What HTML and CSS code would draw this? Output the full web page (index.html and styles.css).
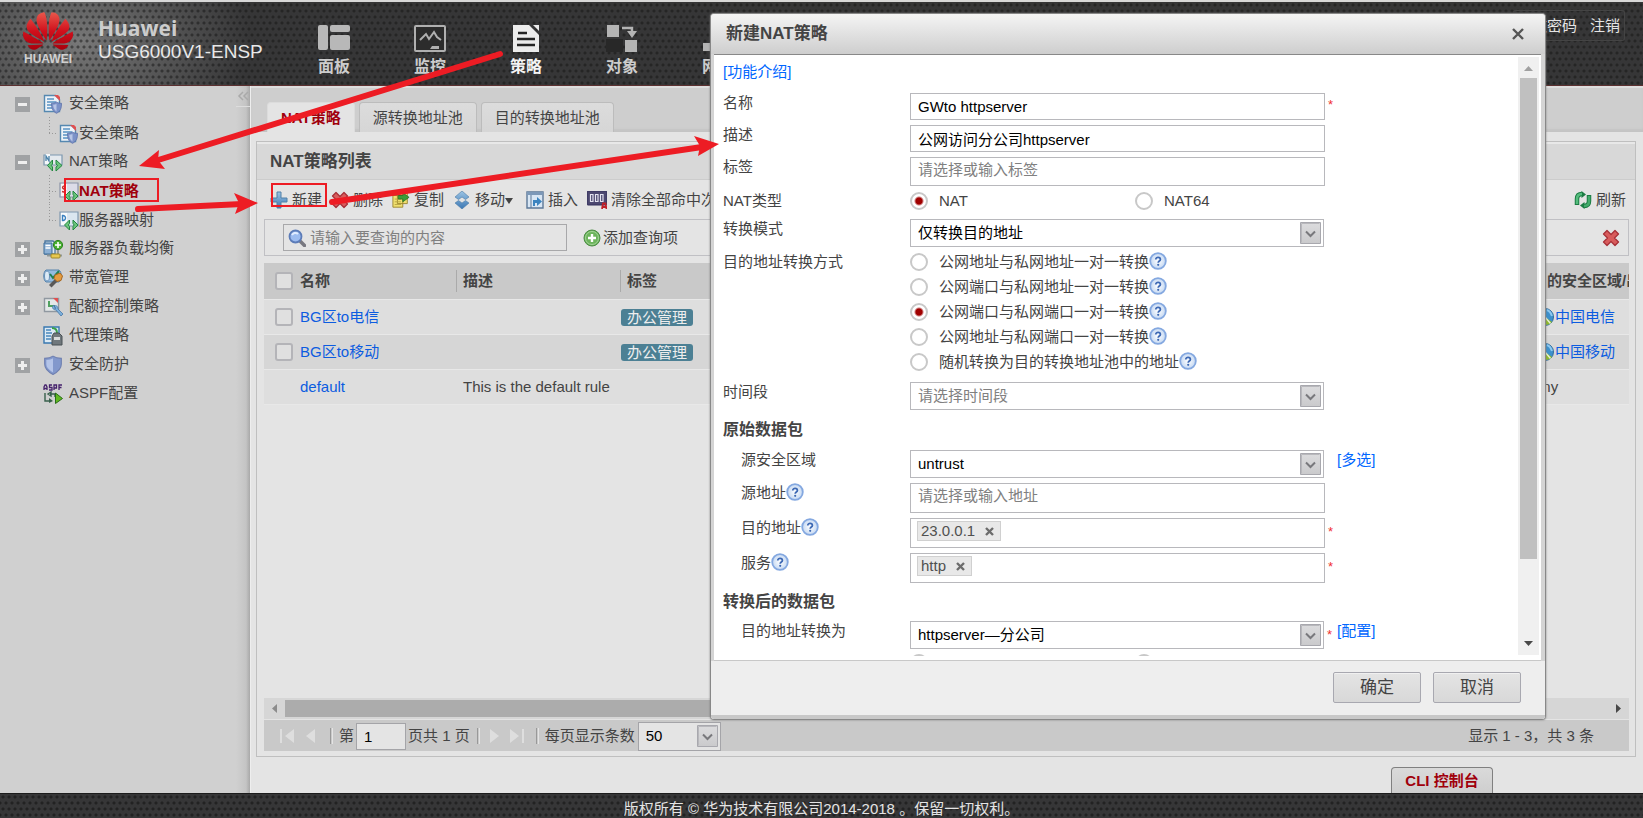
FILE: index.html
```html
<!DOCTYPE html>
<html lang="zh-CN">
<head>
<meta charset="utf-8">
<title>USG6000V1-ENSP</title>
<link rel="stylesheet" href="styles.css">
</head>
<body>
<svg class="defs" width="0" height="0" aria-hidden="true">
  <defs>
    <linearGradient id="gRed" x1="0" y1="0" x2="0" y2="1"><stop offset="0" stop-color="#e8584c"/><stop offset=".5" stop-color="#d0101c"/><stop offset="1" stop-color="#a8000c"/></linearGradient>
    <linearGradient id="gBlue" x1="0" y1="0" x2="0" y2="1"><stop offset="0" stop-color="#9cc4e4"/><stop offset="1" stop-color="#3c78b4"/></linearGradient>
    <linearGradient id="gBtn" x1="0" y1="0" x2="0" y2="1"><stop offset="0" stop-color="#dcdcde"/><stop offset="1" stop-color="#cacacc"/></linearGradient>
    <radialGradient id="gHelp"><stop offset="0" stop-color="#fff"/><stop offset="1" stop-color="#c4d8f2"/></radialGradient>
    <symbol id="shield" viewBox="0 0 18 18"><path d="M9 1c2 1.500 4.500 2 7.500 2v5c0 4-3 7-7.500 9.500C4.500 15 1.500 12 1.500 8V3C4.500 3 7 2.500 9 1z" fill="#8298cc" stroke="#7080b0"/><path d="M9 3v12.500C5.500 13.500 3 11 3 8V4.500c2.500 0 4.500-.5 6-1.500z" fill="#b4c4e8"/></symbol>
    <symbol id="policy" viewBox="0 0 20 20"><path d="M1.500 1.500h11l4 4v12h-15z" fill="#eef3f8" stroke="#5588b0" stroke-width="1.400"/><path d="M4 5h7M4 8h9M4 11h6M4 14h5" stroke="#5a94c4" stroke-width="1.500"/><path d="M11 1l6 6V3l-2-2z" fill="#e05050"/><path d="M13.500 8c1.500 1 3 1.300 5 1.300 0 5-1 8-5 10-4-2-5-5-5-10 2 0 3.500-.3 5-1.300z" fill="#7c92c8" stroke="#5c70a8" stroke-width=".8"/><path d="M13.500 10v7.500c-2-1.500-3.300-3.500-3.300-6.800 1.300 0 2.300-.2 3.300-.7z" fill="#b8c6e6"/></symbol>
    <symbol id="nat" viewBox="0 0 20 20"><path d="M1 3h18v10H1z" fill="#e4e9ee" stroke="#7c98b0" stroke-width="1.200"/><path d="M2 2h5v10H2z" fill="#f6f8fa"/><path d="M3 9V4l3 5V4" stroke="#4880a8" stroke-width="1.300" fill="none"/><path d="M9.500 8L4.500 13.500l5 5.500v-4l-1.200-1.500 1.200-1.500zM13 8l6 5.500-6 5.500v-4l1.700-1.500L13 12z" fill="#6cc47c" stroke="#228840" stroke-width="1"/></symbol>
    <symbol id="natSrc" viewBox="0 0 20 20"><path d="M1 1h18v14H1z" fill="#dcdce8" stroke="#8c94a8" stroke-width="1.200"/><path d="M2 2h6v12H2z" fill="#f8f4f4"/><path d="M6.500 4.500c-3-1.500-4 2-1.500 2.500S7 11 3 9.500" stroke="#c03030" stroke-width="1.400" fill="none"/><path d="M11 9l-5 5 5 5v-3.500L9.800 14l1.200-1.500zM14 9l5 5-5 5v-3.500l1.200-1.500-1.200-1.500z" fill="#6cc47c" stroke="#228840"/></symbol>
    <symbol id="natDst" viewBox="0 0 20 20"><path d="M1 1h18v14H1z" fill="#dbe6f0" stroke="#8098b0" stroke-width="1.200"/><path d="M2 2h6v12H2z" fill="#f8fafc"/><path d="M3.500 4.500v5c4 .5 4-5.500 0-5z" stroke="#3a80c0" stroke-width="1.400" fill="none"/><path d="M10.500 9l-5 5 5 5v-3.500L9.300 14l1.200-1.500zM14 9l5 5-5 5v-3.500l1.200-1.500-1.200-1.500z" fill="#6cc47c" stroke="#228840"/></symbol>
    <symbol id="slb" viewBox="0 0 20 20"><path d="M2 2h8l2 2v11H2z" fill="#dce8f2" stroke="#4c78a0" stroke-width="1.300"/><path d="M1 4h8v11H1z" fill="#8cb0d4" stroke="#3c6c98"/><path d="M2.500 6.500h5M2.500 9h5" stroke="#fff" stroke-width="1.500"/><circle cx="15" cy="6" r="4.600" fill="#48b030" stroke="#2c8020"/><path d="M15 3v6M12 6h6" stroke="#fff" stroke-width="1.600"/><path d="M15 11v5M4 16.500h15" stroke="#909898" stroke-width="2"/><rect x="8" y="15" width="9" height="4" rx="1" fill="#e8c850" stroke="#a08828"/></symbol>
    <symbol id="band" viewBox="0 0 20 20"><path d="M3 2h13c3 2 3 9 0 12H3C0 12 0 4 3 2z" fill="#94bce0" stroke="#5884ac"/><ellipse cx="4" cy="8" rx="2.500" ry="5" fill="#dceaf6" stroke="#6890b8"/><path d="M7 6l3 4 6-7" stroke="#208050" stroke-width="2" fill="none"/><path d="M6 17l7-7 2.500 2.500-7 7z" fill="#585858"/><path d="M12 7l5-2 2.500 3-1.500 4.500-4 1-3-3z" fill="#e49c40" stroke="#a86820"/></symbol>
    <symbol id="quota" viewBox="0 0 20 20"><path d="M1.500 1.500h14v13h-14z" fill="#e4e8e8" stroke="#9098a0" stroke-width="1.400"/><path d="M6 4v5h6" stroke="#50a060" stroke-width="2" fill="none"/><path d="M10 1h5v5z" fill="#e05050"/><path d="M11 8c-3 2-1 5 2 5l5 6 2-2-5-5c0-3-2-4-4-3l2 2-1 1z" fill="#7cb0dc" stroke="#4878a8" stroke-width=".8"/></symbol>
    <symbol id="proxy" viewBox="0 0 20 20"><path d="M1 1h15v16H1z" fill="#dceaf4" stroke="#3878b0" stroke-width="1.400"/><path d="M3 4h5M3 7h6M3 10h5M3 13h5" stroke="#4888bc" stroke-width="1.500"/><path d="M9 2c4 0 5 2 5 5" stroke="#38a048" stroke-width="2" fill="none"/><path d="M9 10l2-3h5l3 3v9H9z" fill="#70787c" stroke="#485054"/><path d="M11 11h6v3h-6z" fill="#d8dcdc"/></symbol>
    <symbol id="aspf" viewBox="0 0 20 20"><path d="M1 6V3l1-2h1l1 2v3M1 4.500h3M9 1H6.500v2.500H9V6H6M11 6V1h2.500v3H11M19 1h-3v5M16 3.500h2.500" stroke="#46226c" stroke-width="1.300" fill="none"/><path d="M2 9v8h5M7 10h5v3M5 10l3-2v4z" stroke="#38604c" stroke-width="1.400" fill="none"/><path d="M12.500 9l7 5.500-7 5z" fill="#60b820" stroke="#286c18"/><path d="M6 14l4 3-4 2z" fill="#38604c"/></symbol>
    <symbol id="plus" viewBox="0 0 18 18"><path d="M7 1h4v6h6v4h-6v6H7v-6H1V7h6z" fill="url(#gBlue)" stroke="#5080a8"/></symbol>
    <symbol id="cross" viewBox="0 0 18 18"><path d="M5 1.500l4 4 4-4 3.500 3.500-4 4 4 4-3.500 3.500-4-4-4 4L1.500 13l4-4-4-4z" fill="#d85c5c" stroke="#a83038" stroke-width="1.300" stroke-linejoin="round"/></symbol>
    <symbol id="copy" viewBox="0 0 20 18"><path d="M6 1h11v12H6zM1 4h11v13H1z" fill="#f0e070" stroke="#98842c"/><path d="M3 8h7M3 11h7M3 14h7" stroke="#b8a440"/><path d="M7 4h5V1l7 5-7 5V8H7z" fill="#3c9c38" stroke="#1c6c20" stroke-width=".8"/></symbol>
    <symbol id="move" viewBox="0 0 16 18"><path d="M8 0l7 6-3.500 2.500L8 6 4.500 8.500 1 6zM8 18l7-6-3.500-2.500L8 12 4.500 9.500 1 12z" fill="url(#gBlue)" stroke="#4c7ca8" stroke-width=".6"/></symbol>
    <symbol id="insert" viewBox="0 0 18 18"><path d="M1 1h16v16H1z" fill="#d8e6f4" stroke="#5c7898" stroke-width="1.400"/><path d="M1 1h16v3H1z" fill="#7c98b8"/><path d="M5 4v13" stroke="#5c7898"/><path d="M7 15v-6h4V6l5 4.500-5 4.500v-3H9v3z" fill="#3c84c0"/></symbol>
    <symbol id="counter" viewBox="0 0 20 18"><rect x="0" y="0" width="20" height="14" rx="1" fill="#4c4870" stroke="#34305c"/><path d="M3.500 3.500H6v7H3.500zM8.500 3.500H11v7H8.500zM13.500 3.500H16v7h-2.500z" fill="none" stroke="#e4e4f0" stroke-width="1.200"/><path d="M15 18l1-5.500h2.500L19.500 18M16 16h3" stroke="#c02028" stroke-width="1.800" fill="none"/></symbol>
    <symbol id="search" viewBox="0 0 18 18"><path d="M11 11l5.500 5.500" stroke="#787880" stroke-width="3.500" stroke-linecap="round"/><circle cx="7.500" cy="7.500" r="6" fill="#9cbcf0" stroke="#5c7cb8" stroke-width="1.800"/><path d="M4 6c1-2 4-3 6-1" stroke="#e0ecff" stroke-width="2" fill="none"/></symbol>
    <symbol id="add" viewBox="0 0 18 18"><circle cx="9" cy="9" r="8" fill="#6cb45c" stroke="#4c8c44"/><circle cx="9" cy="9" r="6.500" fill="none" stroke="#a4d498"/><path d="M9 5v8M5 9h8" stroke="#fff" stroke-width="2.400"/></symbol>
    <symbol id="refresh" viewBox="0 0 18 18"><path d="M8 3C4 3 3 5 3 8v6" fill="none" stroke="#1c7c44" stroke-width="4.500"/><path d="M7.500 0v7L12 3.500z" fill="#1c7c44"/><path d="M8 3C4 3 3 5 3 8v5" fill="none" stroke="#54bc7c" stroke-width="2.500"/><path d="M10 15c4 0 5-2 5-5V4" fill="none" stroke="#1c7c44" stroke-width="4.500"/><path d="M10.500 18v-7L6 14.500z" fill="#1c7c44"/><path d="M10 15c4 0 5-2 5-5V5" fill="none" stroke="#44ac6c" stroke-width="2.500"/></symbol>
    <symbol id="globe" viewBox="0 0 18 18"><circle cx="9" cy="9" r="8.500" fill="#3c90cc" stroke="#306c9c"/><path d="M9 9l7 5c-3 4-10 4-14 0z" fill="#90bc28"/><path d="M9 9l5.500 6.500M9 9l-7 5" stroke="#e8f0d8" stroke-width="1.400"/><path d="M11 2c3 1 4 3 5 6" stroke="#8cc8f0" stroke-width="2" fill="none"/></symbol>
    <symbol id="help" viewBox="0 0 18 18"><circle cx="9" cy="9" r="7.800" fill="url(#gHelp)" stroke="#84a8e0" stroke-width="1.800"/><path d="M6.800 7.400c0-2.800 4.600-2.600 4.600 0 0 1.600-2.200 1.700-2.200 3.300" stroke="#3c68b4" stroke-width="1.800" fill="none"/><circle cx="9.200" cy="12.800" r="1.100" fill="#3c68b4"/></symbol>
    <symbol id="drop" viewBox="0 0 21 22"><path d="M.5.5h20v21H.5z" fill="url(#gBtn)" stroke="#a8a8ae"/><path d="M1.500 20.500V1.500h18" fill="none" stroke="#b8b8bc"/><path d="M6 9.500l4.500 4.500L15 9.500" fill="none" stroke="#78787c" stroke-width="2"/></symbol>
    <symbol id="tabx" viewBox="0 0 9 9"><path d="M1 1l7 7M8 1L1 8" stroke="#6c6c6c" stroke-width="2.400"/></symbol>
  </defs>
</svg>

<header class="top">
  <div class="logo">
    <svg width="50" height="38" viewBox="0 2.900 24 18.200" aria-hidden="true"><path fill="url(#gRed)" d="M3.670 6.140S1.820 7.910 1.720 9.780v.35c.08 1.510 1.220 2.400 1.220 2.400 1.830 1.790 6.260 4.040 7.300 4.550 0 0 .06.03.1-.01l.02-.04v-.04C7.520 10.800 3.670 6.140 3.670 6.140zM9.650 18.600c-.02-.08-.1-.08-.1-.08l-7.380.26c.8 1.430 2.150 2.530 3.560 2.200.96-.25 3.160-1.780 3.880-2.300.06-.05.04-.09.04-.09zm.08-.78C6.490 15.630.21 12.280.21 12.280c-.15.46-.2.9-.21 1.300v.07c0 1.070.4 1.820.4 1.820.8 1.690 2.340 2.200 2.340 2.200.7.3 1.400.31 1.400.31.12.02 4.400 0 5.540 0 .05 0 .08-.05.08-.05v-.06c0-.03-.03-.05-.03-.05zM9.060 3.190a3.420 3.420 0 00-2.570 3.150v.41c.03.6.16 1.050.16 1.050.66 2.900 3.860 7.650 4.550 8.650.05.05.1.03.1.03a.1.1 0 00.06-.1c1.060-10.600-1.110-13.420-1.110-13.420-.32.02-1.190.23-1.190.23zm8.299 2.270s-.49-1.800-2.440-2.280c0 0-.57-.14-1.170-.22 0 0-2.180 2.810-1.120 13.430.01.07.06.08.06.08.07.03.1-.03.1-.03.72-1.030 3.900-5.760 4.550-8.640 0 0 .36-1.400.02-2.340zm-2.920 13.070s-.07 0-.09.05c0 0-.01.07.03.1.7.51 2.850 2 3.880 2.300 0 0 .16.05.43.06h.14c.69-.02 1.900-.37 3-2.260l-7.400-.25zm7.830-8.410c.14-2.060-1.940-3.970-1.940-3.980 0 0-3.850 4.660-6.670 10.800 0 0-.03.08.02.13l.04.01h.06c1.060-.53 5.460-2.770 7.280-4.540 0 0 1.150-.93 1.210-2.420zm1.520 2.140s-6.280 3.370-9.520 5.550c0 0-.05.04-.03.11 0 0 .03.06.07.06 1.160 0 5.560 0 5.670-.02 0 0 .57-.02 1.270-.29 0 0 1.560-.5 2.370-2.270 0 0 .73-1.450.17-3.140z"/></svg>
    <span class="logo-name">HUAWEI</span>
  </div>
  <div class="device"><strong class="brand">Huawei</strong><span class="model">USG6000V1-ENSP</span></div>
  <nav class="nav">
    <a class="nav-item" href="#dash"><svg width="32" height="28" viewBox="0 0 32 28"><g fill="#b8b8b8"><rect width="10" height="25" rx="2"/><rect x="12" width="20" height="7" rx="2"/><rect x="12" y="10" width="20" height="15" rx="2"/></g></svg>面板</a>
    <a class="nav-item" href="#monitor"><svg width="32" height="28" viewBox="0 0 32 28"><rect x="1" y="1" width="30" height="25" rx="1" fill="#2c2c2c" stroke="#b0b0b0" stroke-width="2"/><path d="M6 15l6-6 3 5 5-7 3 5 4 3" fill="none" stroke="#b0b0b0" stroke-width="2"/><path d="M18 21h7v3h-9z" fill="#b0b0b0"/></svg>监控</a>
    <a class="nav-item current" href="#policy"><svg width="32" height="28" viewBox="0 0 32 28"><path d="M3 0h16l10 10v17H3z" fill="#ececec"/><path d="M23 0h6v6z" fill="#ececec"/><path d="M8 8h9M7 14h18M7 20h18" stroke="#242424" stroke-width="2.500"/></svg>策略</a>
    <a class="nav-item" href="#object"><svg width="32" height="28" viewBox="0 0 32 28"><path d="M0 14h17v13H0z" fill="#282828"/><path d="M1 0h12v12H1zM19 15h12v12H19z" fill="#b4b4b4"/><path d="M16 3h10v4" fill="none" stroke="#b4b4b4" stroke-width="2.500"/><path d="M21 6h10l-5 7z" fill="#b4b4b4"/></svg>对象</a>
    <a class="nav-item" href="#network"><svg width="32" height="28" viewBox="0 0 32 28"><path d="M10 0h12v10h-5v6h14v10H19v-8h-6v8H1V18h14V10h-5z" fill="#b4b4b4"/></svg>网络</a>
  </nav>
  <div class="account"><a href="#password">修改密码</a><a href="#logout">注销</a></div>
</header>

<div class="middle">
  <aside class="side">
    <ul class="tree">
      <li class="node"><button class="toggle minus" aria-label="收起"></button><svg class="ico"><use href="#policy"/></svg><a href="#a">安全策略</a></li>
      <li class="node child last"><svg class="ico"><use href="#policy"/></svg><a href="#a1">安全策略</a></li>
      <li class="node"><button class="toggle minus" aria-label="收起"></button><svg class="ico"><use href="#nat"/></svg><a href="#b">NAT策略</a></li>
      <li class="node child active"><svg class="ico"><use href="#natSrc"/></svg><a href="#b1">NAT策略</a></li>
      <li class="node child last"><svg class="ico"><use href="#natDst"/></svg><a href="#b2">服务器映射</a></li>
      <li class="node"><button class="toggle" aria-label="展开"></button><svg class="ico"><use href="#slb"/></svg><a href="#c">服务器负载均衡</a></li>
      <li class="node"><button class="toggle" aria-label="展开"></button><svg class="ico"><use href="#band"/></svg><a href="#d">带宽管理</a></li>
      <li class="node"><button class="toggle" aria-label="展开"></button><svg class="ico"><use href="#quota"/></svg><a href="#e">配额控制策略</a></li>
      <li class="node"><span class="no-toggle"></span><svg class="ico"><use href="#proxy"/></svg><a href="#f">代理策略</a></li>
      <li class="node"><button class="toggle" aria-label="展开"></button><svg class="ico"><use href="#shield"/></svg><a href="#g">安全防护</a></li>
      <li class="node"><span class="no-toggle"></span><svg class="ico"><use href="#aspf"/></svg><a href="#h">ASPF配置</a></li>
    </ul>
    <button class="collapse" aria-label="收起菜单"><svg width="12" height="10" viewBox="0 0 12 10"><path d="M6 1L2 5l4 4M11 1L7 5l4 4" fill="none" stroke="#aaa" stroke-width="1.500"/></svg></button>
  </aside>

  <main class="work">
    <div class="tabs">
      <a class="tab selected" href="#t1">NAT策略</a>
      <a class="tab" href="#t2">源转换地址池</a>
      <a class="tab" href="#t3">目的转换地址池</a>
    </div>
    <section class="panel">
      <h2 class="panel-title">NAT策略列表</h2>
      <div class="toolbar">
        <button class="tool"><svg class="ti"><use href="#plus"/></svg>新建</button>
        <button class="tool"><svg class="ti"><use href="#cross"/></svg>删除</button>
        <button class="tool"><svg class="ti"><use href="#copy"/></svg>复制</button>
        <button class="tool menu"><svg class="ti"><use href="#move"/></svg><span>移动<svg class="caret" width="8" height="6" viewBox="0 0 8 6"><path d="M0 0h8L4 6z" fill="#444"/></svg></span></button>
        <button class="tool"><svg class="ti"><use href="#insert"/></svg>插入</button>
        <button class="tool"><svg class="ti wide"><use href="#counter"/></svg>清除全部命中次数</button>
        <button class="tool end"><svg class="ti"><use href="#refresh"/></svg>刷新</button>
      </div>
      <div class="query">
        <label class="query-box"><svg class="ti"><use href="#search"/></svg><input class="query-input" type="text" placeholder="请输入要查询的内容" aria-label="查询"></label>
        <button class="add"><svg class="ti"><use href="#add"/></svg>添加查询项</button>
        <button class="clear" aria-label="清除"><svg class="ti"><use href="#cross"/></svg></button>
      </div>
      <div class="grid-body">
        <table class="grid">
          <colgroup><col class="c-check"><col class="c-name"><col class="c-desc"><col><col class="c-zone"></colgroup>
          <thead><tr><th><input class="check" type="checkbox" aria-label="全选"></th><th>名称</th><th class="split">描述</th><th class="split">标签</th><th class="zone">目的安全区域/出接口</th></tr></thead>
          <tbody>
            <tr><td><input class="check" type="checkbox" aria-label="选择 BG区to电信"></td><td><a href="#r1">BG区to电信</a></td><td></td><td class="tag-cell"><span class="tag">办公管理</span></td><td><a class="zone-link" href="#z1"><svg class="ti"><use href="#globe"/></svg>中国电信</a></td></tr>
            <tr class="alt"><td><input class="check" type="checkbox" aria-label="选择 BG区to移动"></td><td><a href="#r2">BG区to移动</a></td><td></td><td class="tag-cell"><span class="tag">办公管理</span></td><td><a class="zone-link" href="#z2"><svg class="ti"><use href="#globe"/></svg>中国移动</a></td></tr>
            <tr><td></td><td><a href="#r3">default</a></td><td class="desc">This is the default rule</td><td></td><td class="any">any</td></tr>
          </tbody>
        </table>
      </div>
      <div class="hscroll"><svg width="21" height="21" viewBox="0 0 21 21"><path d="M13 6v9l-5-4.500z" fill="#8c8c8c"/></svg><span class="hthumb"></span><svg width="21" height="21" viewBox="0 0 21 21"><path d="M8 6v9l5-4.500z" fill="#484848"/></svg></div>
      <div class="pager">
        <button class="pg" aria-label="首页"><svg width="16" height="14" viewBox="0 0 16 14"><path d="M1 0h2v14H1zM15 0v14L6 7z" fill="#dedede"/></svg></button>
        <button class="pg" aria-label="上一页"><svg width="16" height="14" viewBox="0 0 16 14"><path d="M12 0v14L3 7z" fill="#dedede"/></svg></button>
        <span class="bar"></span>
        <label class="pg-label" for="page">第</label><input class="pg-input" id="page" type="text" value="1"><span>页共 1 页</span>
        <span class="bar"></span>
        <button class="pg" aria-label="下一页"><svg width="16" height="14" viewBox="0 0 16 14"><path d="M3 0v14l9-7z" fill="#dedede"/></svg></button>
        <button class="pg" aria-label="末页"><svg width="16" height="14" viewBox="0 0 16 14"><path d="M13 0h2v14h-2zM1 0v14l9-7z" fill="#dedede"/></svg></button>
        <span class="bar"></span>
        <label class="pg-label" for="size">每页显示条数</label>
        <span class="combo small"><select id="size"><option>50</option></select><svg><use href="#drop"/></svg></span>
        <span class="total">显示 1 - 3，共 3 条</span>
      </div>
    </section>
    <div class="console"><button class="cli">CLI 控制台</button></div>
  </main>
</div>
<footer class="foot">版权所有 © 华为技术有限公司2014-2018 。保留一切权利。</footer>

<section class="dialog" role="dialog" aria-labelledby="dlg">
  <header class="dlg-head"><h2 id="dlg">新建NAT策略</h2><button class="close" aria-label="关闭"><svg width="12" height="12" viewBox="0 0 12 12"><path d="M1 1l10 10M11 1L1 11" stroke="#555" stroke-width="2.400"/></svg></button></header>
  <div class="dlg-body">
    <form class="form" id="f">
      <a class="intro" href="#intro">[功能介绍]</a>
      <div class="row"><label for="name">名称</label><input class="field" id="name" type="text" value="GWto httpserver"><span class="req">*</span></div>
      <div class="row"><label for="desc">描述</label><input class="field" id="desc" type="text" value="公网访问分公司httpserver"></div>
      <div class="row"><label for="tags">标签</label><input class="field tall" id="tags" type="text" placeholder="请选择或输入标签"></div>
      <div class="row"><span>NAT类型</span><div class="pair"><label class="opt"><input type="radio" name="type" checked>NAT</label><label class="opt"><input type="radio" name="type">NAT64</label></div></div>
      <div class="row"><label for="mode">转换模式</label><span class="combo"><select id="mode"><option>仅转换目的地址</option></select><svg><use href="#drop"/></svg></span></div>
      <div class="row"><span>目的地址转换方式</span>
        <div class="stack">
          <div class="line"><label class="opt"><input type="radio" name="way">公网地址与私网地址一对一转换</label><svg class="ti"><use href="#help"/></svg></div>
          <div class="line"><label class="opt"><input type="radio" name="way">公网端口与私网地址一对一转换</label><svg class="ti"><use href="#help"/></svg></div>
          <div class="line"><label class="opt"><input type="radio" name="way" checked>公网端口与私网端口一对一转换</label><svg class="ti"><use href="#help"/></svg></div>
          <div class="line"><label class="opt"><input type="radio" name="way">公网地址与私网端口一对一转换</label><svg class="ti"><use href="#help"/></svg></div>
          <div class="line"><label class="opt"><input type="radio" name="way">随机转换为目的转换地址池中的地址</label><svg class="ti"><use href="#help"/></svg></div>
        </div>
      </div>
      <div class="row"><label for="time">时间段</label><span class="combo empty"><select id="time"><option>请选择时间段</option></select><svg><use href="#drop"/></svg></span></div>
      <h3 class="group">原始数据包</h3>
      <div class="row sub"><label for="zone">源安全区域</label><span class="combo"><select id="zone"><option>untrust</option></select><svg><use href="#drop"/></svg></span><a class="side-link" href="#multi">[多选]</a></div>
      <div class="row sub"><label for="src">源地址<svg class="ti"><use href="#help"/></svg></label><input class="field tall" id="src" type="text" placeholder="请选择或输入地址"></div>
      <div class="row sub"><span class="lbl">目的地址<svg class="ti"><use href="#help"/></svg></span><div class="field chips"><span class="chip">23.0.0.1<button type="button" aria-label="移除 23.0.0.1"><svg width="9" height="9"><use href="#tabx"/></svg></button></span></div><span class="req low">*</span></div>
      <div class="row sub"><span class="lbl">服务<svg class="ti"><use href="#help"/></svg></span><div class="field chips"><span class="chip">http<button type="button" aria-label="移除 http"><svg width="9" height="9"><use href="#tabx"/></svg></button></span></div><span class="req low">*</span></div>
      <h3 class="group second">转换后的数据包</h3>
      <div class="row sub"><label for="to">目的地址转换为</label><span class="combo"><select id="to"><option>httpserver—分公司</option></select><svg><use href="#drop"/></svg></span><span class="req low">*</span><a class="side-link after" href="#conf">[配置]</a></div>
      <div class="row"><span></span><div class="pair"><input type="radio" name="port" aria-label="端口"><input type="radio" name="port" aria-label="端口范围"></div></div>
    </form>
    <div class="vscroll"><svg width="21" height="21" viewBox="0 0 21 21"><path d="M6 14h9l-4.500-5z" fill="#a0a0a0"/></svg><span class="vthumb"></span><svg class="down" width="21" height="21" viewBox="0 0 21 21"><path d="M6 7h9l-4.500 5z" fill="#484848"/></svg></div>
  </div>
  <footer class="dlg-foot"><button class="btn">确定</button><button class="btn">取消</button></footer>
</section>

<svg class="marks" width="1643" height="818" viewBox="0 0 1643 818" aria-hidden="true">
  <g fill="none" stroke="#ed1c24" stroke-width="2"><path d="M65 179h93v22H65zM272 184h54v22h-54z"/></g>
  <g stroke="#ed1c24" stroke-width="6" stroke-linecap="round"><path d="M500 54L155 161M138 209l104-5M332 202l370-55"/></g>
  <g fill="#ed1c24"><path d="M139 166l20-16-1 10 7 9zM258 203l-24-10 5 10-4 11zM719 144l-25-8 6 10-2 10z"/></g>
</svg>
</body>
</html>
```
FILE: styles.css
```css
* { box-sizing: border-box; }
body {
  margin: 0;
  min-height: 100vh;
  display: flex;
  flex-direction: column;
  font: 15px/20px "Liberation Sans", "Noto Sans CJK SC", sans-serif;
  color: #444;
  background: #e4e4e4;
}
a { color: inherit; text-decoration: none; }
button, input, select { font: inherit; color: inherit; margin: 0; }
button { padding: 0; border: 0; background: none; }
h2, h3 { margin: 0; }
svg { flex: none; }
.defs { position: absolute; }
.ti { width: 18px; height: 18px; }
.ti.wide { width: 20px; }
.ico { width: 20px; height: 20px; }

.top, .foot {
  background-color: #363637;
  background-image:
    radial-gradient(circle at 3px 3px, rgba(20, 20, 20, .6) 1px, transparent 2px),
    radial-gradient(circle at 6px 9px, rgba(20, 20, 20, .6) 1px, transparent 2px),
    radial-gradient(circle at 0 9px, rgba(20, 20, 20, .6) 1px, transparent 2px);
  background-size: 6px 12px;
}
.top {
  display: flex;
  height: 86px;
  border-top: 2px solid #d8d8d8;
  border-bottom: 1px solid #5c3030;
  background-image:
    radial-gradient(circle at 3px 3px, rgba(20, 20, 20, .5) 1px, transparent 2px),
    radial-gradient(circle at 6px 9px, rgba(20, 20, 20, .5) 1px, transparent 2px),
    radial-gradient(circle at 0 9px, rgba(20, 20, 20, .5) 1px, transparent 2px),
    radial-gradient(ellipse 170px 120px at 80px 40px, #787878, transparent);
  background-size: 6px 12px, 6px 12px, 6px 12px, 100% 100%;
}
.logo { display: flex; flex-direction: column; align-items: center; width: 96px; padding-top: 10px; }
.logo-name { color: #d0d0d0; font-size: 12px; font-weight: bold; line-height: 18px; }
.device { display: flex; flex-direction: column; width: 190px; padding: 14px 0 0 2px; }
.brand { font-family: "Open Sans", sans-serif; font-size: 21px; line-height: 24px; color: #ccc; }
.model { font-size: 19px; line-height: 24px; color: #e8e8e8; }
.nav { display: flex; }
.nav-item { display: flex; flex-direction: column; align-items: center; gap: 2px; width: 96px; padding-top: 23px; font-size: 16px; line-height: 24px; font-weight: bold; color: #ccc; }
.nav-item.current { color: #f4f4f4; }
.account { display: flex; gap: 13px; align-items: center; height: 31px; margin: 8px 18px 0 auto; padding: 0 4px; border: 1px solid #444; border-left: 0; border-radius: 3px; color: #e4e4e4; }

.middle { display: flex; flex: 1; }
.side {
  display: flex;
  width: 250px;
  justify-content: space-between;
  background: linear-gradient(to right, #d0d0d0 236px, #c4c4c4 246px, #a8a8a8);
}
.tree { margin: 0; padding: 2px 0 0 15px; list-style: none; }
.node { display: flex; align-items: center; height: 29px; }
.node .ico { margin: 2px 6px 0 13px; }
.toggle, .no-toggle { width: 15px; height: 15px; margin-top: 3px; }
.toggle {
  background:
    linear-gradient(#eee, #eee) center / 9px 3px no-repeat,
    linear-gradient(#eee, #eee) center / 3px 9px no-repeat,
    #a0a2a4;
}
.toggle.minus { background: linear-gradient(#eee, #eee) center / 9px 3px no-repeat, #a0a2a4; }
.child {
  margin-left: 34px;
  padding-top: 3px;
  background:
    repeating-linear-gradient(to right, #999 0 1px, transparent 1px 3px) left 16px / 9px 1px no-repeat,
    repeating-linear-gradient(#999 0 1px, transparent 1px 3px) left top / 1px 100% no-repeat;
}
.child.last {
  background:
    repeating-linear-gradient(to right, #999 0 1px, transparent 1px 3px) left 16px / 9px 1px no-repeat,
    repeating-linear-gradient(#999 0 1px, transparent 1px 3px) left top / 1px 17px no-repeat;
}
.node.child .ico { margin: 2px 0 0 10px; }
.active a { color: #a0000c; font-weight: bold; }
.collapse { align-self: flex-start; width: 14px; height: 21px; border-bottom: 1px solid #ddd; }

.work { display: flex; flex: 1; flex-direction: column; min-width: 0; border-left: 1px solid #eee; }
.tabs { display: flex; gap: 4px; align-items: flex-end; height: 46px; padding-left: 16px; background: #cecece; border-top: 2px solid #dedede; box-shadow: inset 0 -3px 2px #c4c4c4; }
.tab { padding: 5px 13px 4px; border: 1px solid #bcbcbc; border-bottom: 0; border-radius: 4px 4px 0 0; background: linear-gradient(#dcdcdc, #d6d6d6); }
.tab.selected { background: #e4e4e4; border-color: #dcdcdc; color: #a0000c; font-weight: bold; }
.panel { display: flex; flex: 1; flex-direction: column; margin: 9px 7px 0 5px; border: 1px solid #bfbfbf; padding-bottom: 5px; }
.panel-title { padding: 7px 13px 6px; border-bottom: 1px solid #ccc; border-top: 2px solid #e8e8e8; background: #d8d8d8; font-size: 17px; line-height: 22px; }
.toolbar { display: flex; gap: 8px; height: 39px; padding: 0 9px 0 13px; align-items: center; overflow: hidden; }
.tool { display: flex; gap: 4px; align-items: center; white-space: nowrap; margin-right: 1px; }
.tool.menu { padding-right: 4px; }
.tool.end { margin: 0 0 0 auto; }
.caret { vertical-align: middle; }
.query { display: flex; align-items: center; height: 37px; margin: 0 6px 7px 7px; padding: 0 8px 0 18px; border: 1px solid #c0c0c4; }
.query-box { display: flex; gap: 4px; align-items: center; width: 284px; height: 27px; padding-left: 4px; border: 1px solid #a8a8aa; }
.query-input { flex: 1; min-width: 0; padding: 0; border: 0; background: none; outline: 0; }
.query-input::placeholder { color: #808080; }
.add { display: flex; gap: 2px; align-items: center; margin-left: 16px; }
.clear { display: flex; margin-left: auto; }
.grid-body { flex: 1; margin: 0 6px 0 7px; }
.grid { width: 100%; table-layout: fixed; border-collapse: separate; border-spacing: 0; }
.c-check { width: 36px; }
.c-name { width: 156px; }
.c-desc { width: 164px; }
.c-zone { width: 97px; }
.grid th, .grid td { height: 35px; padding: 0; text-align: left; overflow: hidden; white-space: nowrap; border-bottom: 1px solid #e8e8e8; background: #dedede; }
.grid th { height: 37px; background: #c9c9c9; }
.grid .alt td { background: #d6d6d6; }
.grid td:last-child { padding-left: 4px; }
.grid .split { padding-left: 7px; background: linear-gradient(#aaa, #aaa) left center / 1px 22px no-repeat, #c9c9c9; }
.grid .desc { padding-left: 7px; }
.grid td.any { padding-left: 2px; }
.grid td a { color: #0c5ce0; }
.grid .zone-link { display: flex; gap: 1px; align-items: center; }
.check { display: block; appearance: none; width: 18px; height: 18px; margin-left: 11px; border: 2px solid #b4b4b8; border-radius: 3px; background: #e0e0e0; }
.tag { display: block; width: fit-content; height: 17px; padding: 0 6px; margin-left: 1px; border-radius: 3px; background: #4c8094; color: #eee; line-height: 17px; }
.hscroll { display: flex; height: 21px; margin: 0 6px 1px 7px; background: #d6d6d6; }
.hthumb { flex: 1; margin: 2px 260px 2px 0; background: #acacac; }
.pager { display: flex; align-items: center; height: 31px; margin: 0 6px 0 7px; padding: 1px 35px 0 11px; background: #c9c9c9; }
.pg { display: flex; width: 24px; justify-content: center; }
.bar { width: 3px; height: 16px; margin: 0 6px 0 7px; border-left: 1px solid #999; border-right: 1px solid #e4e4e4; }
.bar + .pg { width: 19px; }
.pg-input { width: 50px; height: 27px; margin: 0 2px; padding: 0 7px; border: 1px solid #a4a4a8; background: #e4e4e4; color: #000; outline: 0; }
.pg-label { white-space: nowrap; }
.total { margin-left: auto; }
.console { display: flex; justify-content: flex-end; align-items: flex-end; height: 36px; padding-right: 150px; }
.cli { width: 102px; height: 26px; border: 1px solid #808080; border-bottom: 0; border-radius: 4px 4px 0 0; background: linear-gradient(#dadada, #cecece); color: #a0000c; font-weight: bold; }
.foot { height: 25px; padding-top: 5px; border-top: 1px solid #1c1c1c; line-height: 20px; text-align: center; color: #e4e4e4; }

.combo { display: grid; width: 414px; height: 28px; border: 1px solid #b8b8bc; background: #fff; }
.combo > * { grid-area: 1 / 1; }
.combo select { appearance: none; width: 100%; height: 26px; padding: 0 7px; border: 0; background: none; color: #000; outline: 0; }
.combo svg { width: 21px; height: 22px; align-self: center; justify-self: end; margin-right: 2px; pointer-events: none; }
.combo.empty select { color: #808080; }
.combo.small { width: 83px; height: 29px; margin-left: 3px; background: #e4e4e4; border-color: #a4a4a8; }

.dialog { position: absolute; left: 710px; top: 13px; width: 836px; border: 1px solid #888; border-radius: 4px; background: #d4d4d4; box-shadow: 0 0 2px #777; overflow: hidden; }
.dlg-head { display: flex; align-items: center; justify-content: space-between; height: 40px; padding: 0 21px 0 15px; background: linear-gradient(#f4f4f4, #cecece); }
.dlg-head h2 { font-size: 17px; line-height: 22px; }
.close { display: flex; }
.dlg-body { display: flex; justify-content: space-between; height: 607px; margin: 0 4px 0 3px; padding: 2px 2px 5px 9px; border-top: 1px solid #888; border-bottom: 1px solid #c8c8c8; background: #fff; overflow: hidden; }
.form { display: flex; flex-direction: column; gap: 5px; height: 599px; overflow: hidden; }
.intro { flex: none; height: 31px; padding-top: 5px; color: #0066ff; }
.row { display: flex; flex: none; align-items: flex-start; }
.row > :first-child { flex: none; width: 187px; min-height: 20px; }
.row.sub > :first-child { display: flex; padding-left: 18px; }
.field { width: 415px; height: 27px; padding: 0 7px; border: 1px solid #b8b8bc; background: #fff; color: #000; outline: 0; }
.field.tall { height: 29px; padding-bottom: 5px; }
.sub .field.tall { height: 30px; }
.field::placeholder { color: #808080; }
.req { padding: 2px 0 0 3px; color: #f03030; font-size: 13px; }
.req.low { padding-top: 4px; }
.pair { display: grid; grid-template-columns: 225px 225px; height: 23px; }
.opt { display: flex; gap: 11px; align-items: center; height: 19px; }
input[type=radio] { appearance: none; width: 18px; height: 18px; border: 2px solid #c8c8c8; border-radius: 50%; background: #fff; }
input[type=radio]:checked { background: radial-gradient(circle, #a00000 3px, #fff 5px); }
.stack { height: 125px; }
.line { display: flex; height: 25px; align-items: flex-start; }
.group { flex: none; height: 30px; padding-top: 5px; font-size: 16px; line-height: 20px; }
.group.second { height: 28px; padding-top: 4px; }
.side-link { margin-left: 13px; color: #0066ff; }
.side-link.after { margin-left: 5px; }
.chips { height: 30px; padding: 2px 6px; }
.chip { display: inline-flex; gap: 10px; align-items: center; height: 20px; padding: 0 6px 0 3px; border: 1px solid #d0d0d0; background: #e8e8e8; color: #505050; }
.chip button { display: flex; }
.vscroll { display: flex; flex-direction: column; width: 21px; background: #f0f0f0; }
.vthumb { height: 481px; margin: 0 2px; background: #c0c0c0; }
.down { margin-top: auto; }
.dlg-foot { display: flex; gap: 12px; justify-content: flex-end; height: 58px; padding: 11px 24px 0 0; background: #eee; border-bottom: 4px solid #c8c8c8; }
.btn { width: 88px; height: 31px; border: 1px solid #a8a8b0; border-radius: 2px; background: linear-gradient(#e4e4e4, #d8d8d8); box-shadow: inset 0 1px #f0f0f0; font-size: 17px; }
.marks { position: absolute; left: 0; top: 0; pointer-events: none; }
```
